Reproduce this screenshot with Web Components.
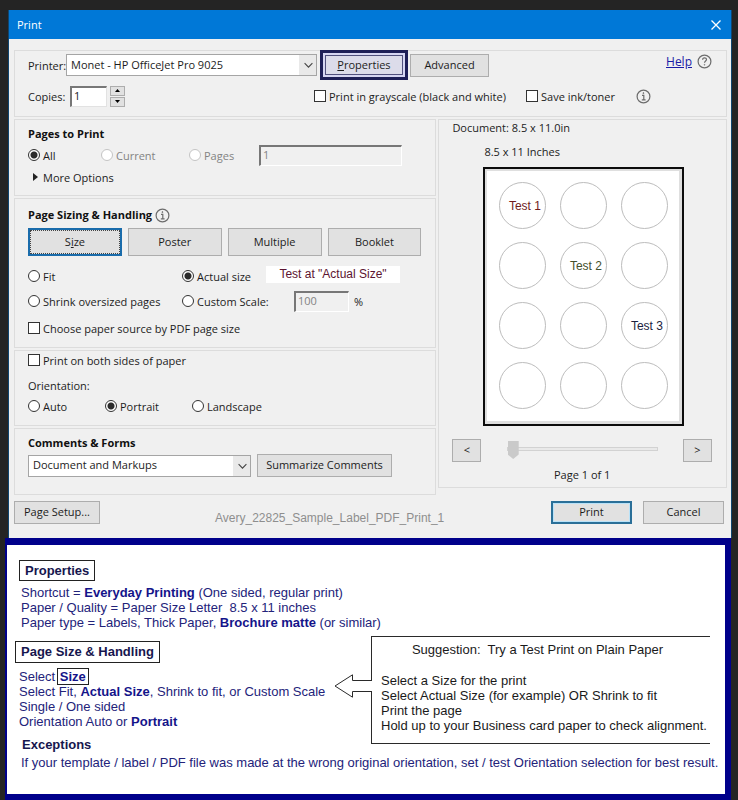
<!DOCTYPE html>
<html lang="en">
<head>
<meta charset="utf-8">
<title>Print</title>
<style>
  body { margin: 0; background: #242424; }
</style>
</head>
<body>
<print-page></print-page>
<script>
const base = `
  *, *::before, *::after { box-sizing: border-box; }
  :host { box-sizing: border-box; display: block; }
  h2 { margin: 0; font-size: 11px; line-height: 16px; font-weight: 700; color: #111; display: flex; align-items: center; gap: 3px; }
  .row { display: grid; align-items: center; }
  .flex { display: flex; align-items: center; }
  label { white-space: nowrap; }
  label.opt { display: flex; align-items: center; gap: 3px; }
  .off { color: #838383; }
  input, select, button { font: inherit; color: inherit; margin: 0; border-radius: 0; }
  input[type=radio], input[type=checkbox] { appearance: none; flex: none; width: 12px; height: 12px; background: #fff; border: 1px solid #333; }
  input[type=radio] { border-radius: 50%; }
  input[type=radio]:checked { background: radial-gradient(circle, #2b2b2b 0 3px, #fff 4px); }
  input:disabled { border-color: #c4c4c4; }
  input.text { min-width: 0; width: 100%; height: 21px; padding: 0 2px 2px; background: #fff; border: 1px solid #e2e2e2; border-top: 2px solid #777; border-left: 2px solid #777; }
  input.text:disabled { background: #f0f0f0; color: #838383; border-right-color: #fff; border-bottom-color: #fff; }
  button { height: 23px; padding: 0 4px 2px; background: #e1e1e1; border: 1px solid #adadad; text-align: center; white-space: nowrap; }
`;
function define(name, css, html) {
  customElements.define(name, class extends HTMLElement {
    constructor() {
      super();
      this.attachShadow({ mode: 'open' }).innerHTML = `<style>${base}${css}</style>${html}`;
    }
  });
}

define('round-icon', `
  :host { display: block; flex: none; width: 15px; height: 15px; }
  svg { display: block; }
  .q { display: none; }
  :host([kind=help]) .q { display: inline; }
  :host([kind=help]) .i { display: none; }
`, `<svg width="15" height="15" viewBox="0 0 15 15" fill="none" stroke="#6c6c6c" stroke-width="1.2">
  <circle cx="7.5" cy="7.5" r="6.4"/>
  <g class="i"><path d="M6 6.3h1.8v4.4M5.8 10.9h3.8" /><circle cx="7.4" cy="4.1" r=".5" fill="#6c6c6c" stroke-width=".8"/></g>
  <g class="q"><path d="M5.6 5.7c0-2.6 3.9-2.4 3.9-.3 0 1.5-2 1.6-2 3.4"/><circle cx="7.5" cy="10.8" r=".4" fill="#6c6c6c" stroke-width=".7"/></g>
</svg>`);

define('combo-box', `
  :host { position: relative; height: 22px; }
  ::slotted(select) { appearance: none; display: block; width: 100%; height: 22px; padding: 0 20px 2px 4px; color: #111; font: inherit; border: 1px solid #a5a5a5; border-radius: 0; background: linear-gradient(to left, #e9e9e9 17px, #fff 17px); }
  svg { position: absolute; right: 4px; top: 8px; pointer-events: none; }
`, `<slot></slot><svg width="9" height="7" viewBox="0 0 9 7" fill="none" stroke="#444" stroke-width="1.1"><path d="M.6 1.2l3.9 3.9 3.9-3.9"/></svg>`);

define('title-bar', `
  :host { background: #0078d7; color: #fff; height: 29px; display: flex; align-items: center; justify-content: space-between; padding: 0 9px 0 8px; }
  button { width: 12px; height: 12px; padding: 0; border: 0; background: none; }
  svg { display: block; }
`, `<slot></slot><button aria-label="Close"><svg width="12" height="12" viewBox="0 0 12 12" stroke="#fff" stroke-width="1.3"><path d="M1.5 1.5l9 9M10.5 1.5l-9 9"/></svg></button>`);

define('group-box', `
  :host { border: 1px solid #dcdcdc; padding: 0 14px 0 13px; }
`, `<slot></slot>`);

define('printer-section', `
  group-box { padding-bottom: 7px; }
  .top { height: 28px; }
  .top label { width: 38px; }
  combo-box { flex: 0 1 251px; min-width: 0; }
  .ring { margin: -1px 2px -1px 3px; border: 3px solid #1e1f57; background: #d6d6f2; padding: 2px; display: flex; }
  .ring button { width: 78px; height: 20px; border-color: #50507c; background: #dcdcea; }
  .adv { width: 79px; }
  .help { margin-left: auto; display: flex; align-items: center; gap: 5px; padding-bottom: 8px; }
  a { color: #1a1aa6; font-size: 12px; }
  .second { grid-template-columns: 286px 212px 1fr; height: 26px; margin-top: 4px; }
  .copies label { width: 42px; }
  .copies input { width: 37px; margin-right: 3px; }
  .spin { display: grid; grid-template-rows: 10px 10px; gap: 1px; }
  .spin button { width: 15px; height: 10px; padding: 0; display: grid; place-items: center; }
  .ink { gap: 21px; }
`, `<group-box>
  <div class="flex top">
    <label for="printer">Printer:</label>
    <combo-box><select id="printer"><option>Monet - HP OfficeJet Pro 9025</option></select></combo-box>
    <div class="ring"><button><u>P</u>roperties</button></div>
    <button class="adv">Advanced</button>
    <div class="help"><a href="#help">Help</a><round-icon kind="help"></round-icon></div>
  </div>
  <div class="row second">
    <div class="flex copies"><label for="copies">Copies:</label><input class="text" id="copies" value="1">
      <div class="spin">
        <button aria-label="More copies"><svg width="5" height="3" viewBox="0 0 5 3"><path d="M0 3L2.5 0 5 3z"/></svg></button>
        <button aria-label="Fewer copies"><svg width="5" height="3" viewBox="0 0 5 3"><path d="M0 0L2.5 3 5 0z"/></svg></button>
      </div>
    </div>
    <label class="opt"><input type="checkbox">Print in grayscale (black and white)</label>
    <div class="flex ink"><label class="opt"><input type="checkbox">Save ink/toner</label><round-icon></round-icon></div>
  </div>
</group-box>`);

define('pages-section', `
  group-box { padding-top: 6px; padding-bottom: 7px; }
  .row { grid-template-columns: 73px 88px 70px minmax(0, 143px); height: 22px; margin-top: 2px; }
  .more { display: flex; align-items: center; gap: 5px; height: 22px; padding: 0 0 0 5px; border: 0; background: none; }
`, `<group-box>
  <h2>Pages to Print</h2>
  <div class="row">
    <label class="opt"><input type="radio" name="range" checked>All</label>
    <label class="opt off"><input type="radio" name="range" disabled>Current</label>
    <label class="opt off"><input type="radio" name="range" disabled>Pages</label>
    <input class="text" value="1" aria-label="Page range" disabled>
  </div>
  <button class="more"><svg width="5" height="8" viewBox="0 0 5 8"><path d="M0 0l5 4-5 4z" fill="#222"/></svg>More Options</button>
</group-box>`);

define('sizing-section', `
  group-box { padding-top: 8px; padding-bottom: 5px; }
  .modes { display: grid; grid-template-columns: repeat(4, 1fr); gap: 6px; margin: 5px 0 8px; }
  .modes button { height: 28px; }
  .modes .on { border: 2px solid #1a6cab; outline: 1px dotted #444; outline-offset: -3px; }
  .fit { grid-template-columns: 154px 84px minmax(0, 134px); height: 24px; }
  .scale { grid-template-columns: 154px 112px 55px auto; height: 26px; }
  .tag { background: #fff; color: #5c1430; font: 12px/17px "Liberation Sans", Arial, sans-serif; text-align: center; margin-bottom: 3px; white-space: nowrap; }
  .pct { padding-left: 5px; }
  .source { height: 28px; }
`, `<group-box>
  <h2>Page Sizing &amp; Handling <round-icon></round-icon></h2>
  <div class="modes"><button class="on">S<u>i</u>ze</button><button>Poster</button><button>Multiple</button><button>Booklet</button></div>
  <div class="row fit">
    <label class="opt"><input type="radio" name="size">Fit</label>
    <label class="opt"><input type="radio" name="size" checked>Actual size</label>
    <div class="tag">Test at "Actual Size"</div>
  </div>
  <div class="row scale">
    <label class="opt"><input type="radio" name="size">Shrink oversized pages</label>
    <label class="opt"><input type="radio" name="size">Custom Scale:</label>
    <input class="text" id="scale" value="100" aria-label="Custom scale" disabled>
    <label class="pct" for="scale">%</label>
  </div>
  <label class="opt source"><input type="checkbox">Choose paper source by PDF page size</label>
</group-box>`);

define('orientation-section', `
  group-box { padding-bottom: 9px; }
  .both { height: 18px; }
  .name { height: 18px; line-height: 18px; margin-top: 8px; }
  .row { grid-template-columns: 77px 87px auto; height: 20px; margin-top: 1px; }
`, `<group-box>
  <label class="opt both"><input type="checkbox">Print on both sides of paper</label>
  <div class="name" id="name">Orientation:</div>
  <div class="row" role="radiogroup" aria-labelledby="name">
    <label class="opt"><input type="radio" name="turn">Auto</label>
    <label class="opt"><input type="radio" name="turn" checked>Portrait</label>
    <label class="opt"><input type="radio" name="turn">Landscape</label>
  </div>
</group-box>`);

define('comments-section', `
  group-box { padding-top: 6px; padding-bottom: 17px; }
  .flex { gap: 6px; margin-top: 3px; }
  combo-box { flex: 0 1 223px; min-width: 0; }
  button { width: 135px; }
`, `<group-box>
  <h2><label for="forms">Comments &amp; Forms</label></h2>
  <div class="flex"><combo-box><select id="forms"><option>Document and Markups</option></select></combo-box><button>Summarize Comments</button></div>
</group-box>`);

define('label-sheet', `
  :host { width: 201px; border: 2px solid #0c0c0c; background: #fff; }
  .sheet { border: solid #dfdfdf; border-width: 2px 3px 3px 2px; padding: 11px 12px 12px; display: grid; grid-template-columns: repeat(3, 47px); grid-auto-rows: 47px; justify-content: start; gap: 13px 14px; font: 12px "Liberation Sans", Arial, sans-serif; }
  .sheet div { border: 1px solid #bdbdbd; border-radius: 50%; display: grid; place-items: center; white-space: nowrap; padding-left: 4px; }
  .red { color: #701c1c; } .green { color: #44502c; } .navy { color: #1a2340; }
`, `<div class="sheet">
  <div class="red">Test 1</div><div></div><div></div>
  <div></div><div class="green">Test 2</div><div></div>
  <div></div><div></div><div class="navy">Test 3</div>
  <div></div><div></div><div></div>
</div>`);

define('preview-section', `
  group-box { padding-bottom: 4px; }
  .doc { line-height: 16px; }
  .paper { line-height: 16px; margin: 8px 0 7px 32px; }
  label-sheet { margin: 0 auto 13px 31px; }
  .nav { justify-content: space-between; }
  .nav button { width: 29px; }
  input[type=range] { appearance: none; flex: 0 1 151px; min-width: 0; height: 18px; background: none; margin-bottom: 3px; }
  input[type=range]::-webkit-slider-runnable-track { height: 4px; border: 1px solid #d2d2d2; background: #e9e9e9; }
  input[type=range]::-webkit-slider-thumb { appearance: none; width: 11px; height: 18px; margin-top: -7px; border: 0; background: #cacaca; clip-path: polygon(0 0, 100% 0, 100% 75%, 50% 100%, 0 75%); }
  .page { text-align: center; line-height: 16px; margin-top: 5px; }
`, `<group-box>
  <div class="doc">Document: 8.5 x 11.0in</div>
  <div class="paper">8.5 x 11 Inches</div>
  <label-sheet></label-sheet>
  <div class="flex nav"><button aria-label="Previous page">&lt;</button><input type="range" min="0" max="10" value="0" aria-label="Page"><button aria-label="Next page">&gt;</button></div>
  <div class="page">Page 1 of 1</div>
</group-box>`);

define('dialog-footer', `
  :host { display: flex; align-items: center; padding: 0 3px 0 0; margin-top: 6px; }
  .file { margin: 12px auto 0 115px; color: #8e8e8e; font: 12px/11px "Liberation Sans", Arial, sans-serif; }
  .setup { width: 86px; }
  .end { width: 81px; margin-left: 11px; }
  .go { border: 2px solid #2a6f98; box-shadow: inset 0 0 0 1px #b9e2f8; }
`, `<button class="setup">Page Setup...</button>
<div class="file">Avery_22825_Sample_Label_PDF_Print_1</div>
<button class="end go">Print</button><button class="end">Cancel</button>`);

define('print-dialog', `
  :host { margin: 10px 6px 0 8px; background: #f0f0f0; border: solid #10456f; border-width: 0 1px; color: #1c1c1c; font: 11px "Open Sans", "Noto Sans", sans-serif; }
  .body { padding: 11px 4px 14px 5px; }
  .cols { display: grid; grid-template-columns: 423fr 289fr; gap: 2px; align-items: start; margin-top: 2px; }
  .left { display: grid; gap: 2px; }
`, `<title-bar>Print</title-bar>
<div class="body">
  <printer-section></printer-section>
  <div class="cols">
    <div class="left"><pages-section></pages-section><sizing-section></sizing-section><orientation-section></orientation-section><comments-section></comments-section></div>
    <preview-section></preview-section>
  </div>
  <dialog-footer></dialog-footer>
</div>`);

define('call-out', `
  :host { display: flex; align-items: flex-start; color: #1a1a1a; }
  svg { flex: none; position: relative; margin: 38px -1px 0 0; background: linear-gradient(#fff, #fff) right 0 top 7px / 1px 10px no-repeat; }
  .text { flex: 1; border: solid #2a2a2a; border-width: 1px 0 1px 1px; padding: 5px 0 10px 9px; }
  p { margin: 0; line-height: 15px; white-space: pre; }
  .first { text-align: center; margin: 0 16px 16px 0; }
`, `<svg width="38" height="24" viewBox="0 0 38 24" fill="none" stroke="#2a2a2a"><path d="M38 6.500H18.500V.8L1 12l17.500 11.200V17.500H38"/></svg>
<div class="text"><p class="first">Suggestion:  Try a Test Print on Plain Paper</p><p>Select a Size for the print</p><p>Select Actual Size (for example) OR Shrink to fit</p><p>Print the page</p><p>Hold up to your Business card paper to check alignment.</p></div>`);

define('notes-panel', `
  :host { margin: 0 7px 0 5px; background: #fff; border: solid #00008b; border-width: 7px 6px 6px 2px; padding: 15px 15px 24px 8px; color: #23237a; font: 13px/15px "Liberation Sans", Arial, sans-serif; }
  p { margin: 0; white-space: pre; }
  h3 { margin: 0; width: max-content; font-size: 13px; line-height: 19px; border: 1px solid #222; padding: 0 5px; color: #16164e; }
  .first { margin: 0 0 4px 4px; }
  .lines { margin-left: 6px; }
  .split { display: grid; grid-template-columns: 319px 1fr; margin-top: 6px; }
  .split h3 { margin: 5px 0 6px; line-height: 20px; }
  .steps { margin-left: 4px; }
  .box { border: 1px solid #222; padding: 0 2px; margin-left: -2px; }
  h4 { margin: 8px 0 0 7px; font-size: 13px; line-height: 15px; color: #16164e; }
  .end { margin: 3px 0 0 6px; }
  b { color: #14148a; }
`, `<h3 class="first">Properties</h3>
<div class="lines"><p>Shortcut = <b>Everyday Printing</b> (One sided, regular print)</p><p>Paper / Quality = Paper Size Letter  8.5 x 11 inches</p><p>Paper type = Labels, Thick Paper, <b>Brochure matte</b> (or similar)</p></div>
<div class="split">
  <div><h3>Page Size &amp; Handling</h3>
    <div class="steps"><p>Select <b class="box">Size</b></p><p>Select Fit, <b>Actual Size</b>, Shrink to fit, or Custom Scale</p><p>Single / One sided</p><p>Orientation Auto or <b>Portrait</b></p></div>
    <h4>Exceptions</h4></div>
  <call-out></call-out>
</div>
<p class="end">If your template / label / PDF file was made at the wrong original orientation, set / test Orientation selection for best result.</p>`);

define('print-page', ``, `<print-dialog></print-dialog><notes-panel></notes-panel>`);
</script>
</body>
</html>
